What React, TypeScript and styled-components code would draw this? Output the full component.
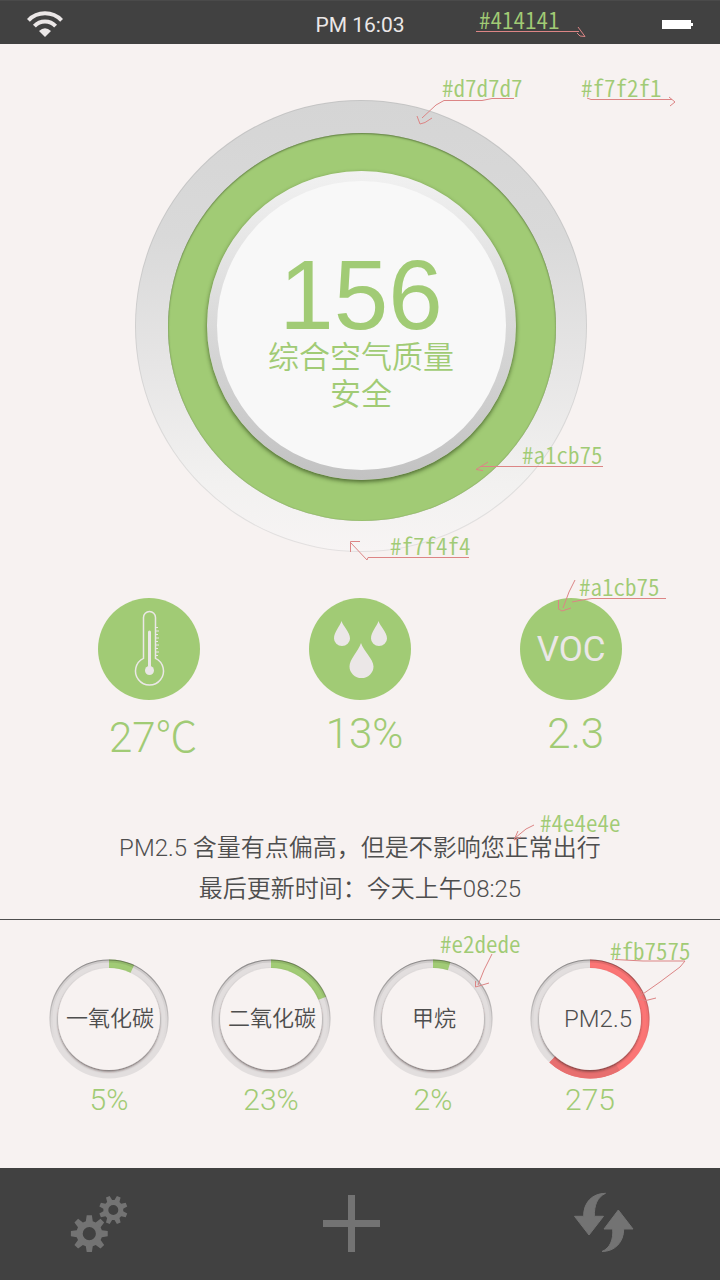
import React from 'react';
import styled, { createGlobalStyle } from 'styled-components';

const GREEN = '#a1cb75';
const RED = '#fb7575';
const DARK = '#414141';
const INK = '#4e4e4e';
const PAPER = '#f7f2f1';
const PALE = '#ebe7e7';
const UI_FONT = "Roboto, 'Noto Sans CJK SC', sans-serif";

const GlobalStyle = createGlobalStyle`
  *, *::before, *::after { box-sizing: border-box; }
  body {
    margin: 0;
    background: ${PAPER};
    color: ${INK};
    font-family: ${UI_FONT};
    font-weight: 300;
  }
`;

const Screen = styled.div`
  position: relative;
  display: flex;
  flex-direction: column;
  min-height: 100vh;
  overflow: hidden;
`;

const StatusBar = styled.header`
  display: grid;
  grid-template-columns: 1fr auto 1fr;
  align-items: center;
  height: 44px;
  padding: 4px 27px 0;
  background: ${DARK};
  border-top: 1px solid #4a4a4a;
  color: ${PALE};
`;

const Clock = styled.time`
  font-size: 21px;
  line-height: 28px;
  font-weight: 400;
`;

const BatterySlot = styled.span`
  display: flex;
  justify-content: flex-end;
`;

const Main = styled.main`
  flex: 1;
`;

const GaugeSection = styled.section`
  display: flex;
  justify-content: center;
  padding: 56px 0 0 2px;
`;

const Disc = styled.div`
  display: flex;
  flex-direction: column;
  align-items: center;
  justify-content: center;
  flex: none;
  border-radius: 50%;
`;

const OuterDisc = styled(Disc)`
  width: 452px;
  height: 452px;
  padding: 2px 0 0 2px;
  border: 1px solid rgba(0, 0, 0, 0.08);
  background: linear-gradient(#d5d5d5, #d9d9d9 30%, #e6e5e5 58%, #f2f1f0 85%, #f7f4f4) border-box;
`;

const ColorDisc = styled(Disc)`
  width: 388px;
  height: 388px;
  padding: 0 2px 4px 0;
  background: ${GREEN};
  box-shadow: inset 0 1px 2px rgba(40, 60, 20, 0.5), inset 0 0 1px rgba(40, 60, 20, 0.3);
`;

const BevelDisc = styled(Disc)`
  width: 309px;
  height: 309px;
  background: linear-gradient(#f1f1f1, #d9d9d9 50%, #c2c2c2);
  box-shadow: 0 2px 4px rgba(30, 50, 10, 0.65);
`;

const FaceDisc = styled(Disc)`
  width: 289px;
  height: 289px;
  padding-top: 14px;
  background: #f8f8f8;
  color: ${GREEN};
`;

const Index = styled.strong`
  font-family: 'Liberation Sans', sans-serif;
  font-size: 98px;
  line-height: 88px;
  font-weight: 400;
`;

const Verdict = styled.span`
  font-size: 31px;
  line-height: 37px;
  font-weight: 350;
`;

const Readings = styled.section`
  display: grid;
  grid-template-columns: repeat(3, 1fr);
  margin-top: 46px;
  padding: 0 6%;
`;

const Reading = styled.div`
  display: flex;
  flex-direction: column;
  align-items: center;
  gap: 10px;
`;

const Badge = styled.div`
  display: flex;
  align-items: center;
  justify-content: center;
  width: 102px;
  height: 102px;
  border-radius: 50%;
  background: ${GREEN};
  color: ${PALE};
  font-size: 35px;
  font-weight: 400;
`;

const Value = styled.span<{ $large?: boolean }>`
  padding-left: ${({ $large }) => ($large ? 9 : 0)}px;
  color: ${GREEN};
  font-size: ${({ $large }) => ($large ? 42 : 30)}px;
  line-height: ${({ $large }) => ($large ? 48 : 36)}px;
`;

const Degree = styled.span`
  font-family: 'Noto Sans CJK SC', sans-serif;
`;

const Notice = styled.section`
  margin-top: 66px;
  padding-bottom: 9px;
  border-bottom: 1px solid ${INK};
  text-align: center;
  font-size: 24px;
  line-height: 41px;
  font-weight: 350;
`;

const Line = styled.p`
  margin: 0;
`;

const Pollutants = styled.section`
  display: grid;
  grid-template-columns: 162fr 162fr 162fr 152fr;
  padding: 39px 54px 48px 28px;
`;

const Pollutant = styled.div`
  display: flex;
  flex-direction: column;
  align-items: center;
  gap: 3px;
`;

const Dial = styled.div`
  display: grid;
  place-items: center;
  width: 120px;
  height: 120px;

  > * {
    grid-area: 1 / 1;
  }
`;

const DialLabel = styled.span<{ $latin?: boolean }>`
  z-index: 1;
  padding-left: ${({ $latin }) => ($latin ? 16 : 2)}px;
  font-size: ${({ $latin }) => ($latin ? 24 : 22)}px;
  line-height: 32px;
  font-weight: 350;
  white-space: nowrap;
`;

const TabBar = styled.nav`
  display: flex;
  align-items: center;
  justify-content: space-between;
  height: 112px;
  padding: 0 88px 2px 70px;
  background: ${DARK};
`;

const TabButton = styled.button`
  width: 58px;
  height: 58px;
  padding: 0;
  border: 0;
  background: none;
  color: #737373;
  cursor: pointer;

  svg {
    display: block;
    overflow: visible;
  }
`;

const NoteLayer = styled.aside`
  position: absolute;
  top: 0;
  left: 50%;
  pointer-events: none;
`;

const NoteText = styled.span<{ $x: number; $y: number }>`
  position: absolute;
  left: ${({ $x }) => $x - 360}px;
  top: ${({ $y }) => $y}px;
  color: ${GREEN};
  font-family: 'Noto Sans CJK SC', sans-serif;
  font-feature-settings: 'hwid';
  font-size: 23px;
  line-height: 28px;
  font-weight: 350;
  white-space: nowrap;
`;

const NoteArrow = styled.svg`
  position: absolute;
  top: 0;
  left: 0;
  overflow: visible;
  fill: none;
  stroke: #dc8585;
  stroke-width: 1;
`;

const notes = [
  { text: '#414141', x: 479, y: 5, d: 'M476 31.5H579M578 27L585 36.5L580 36L577 33' },
  { text: '#d7d7d7', x: 442, y: 73, d: 'M514 98.5H492L482 100.5H444L436 105L422 118M417 116L420 124L425 122.5L432 118' },
  { text: '#f7f2f1', x: 581, y: 73, d: 'M587 98L591 99.5H672M669 97L675 102L670 106' },
  { text: '#a1cb75', x: 522, y: 440, d: 'M603 466.5H480M488 462L476 469.5L483 470.5' },
  { text: '#f7f4f4', x: 390, y: 531, d: 'M469 557.5H368L367 560L351 543M360 541.5H350.5V552' },
  { text: '#a1cb75', x: 579, y: 572, d: 'M666 598.5H592L582 600L572 602M575 580L569 592L563 608M558.5 600V609L562 611L571 608' },
  { text: '#4e4e4e', x: 540, y: 808, d: 'M534 825L526 829L515 838M518 831L514 840L521 837' },
  { text: '#e2dede', x: 440, y: 929, d: 'M492 954L484 970L478 985M475.5 981V987L489 983' },
  { text: '#fb7575', x: 610, y: 936, d: 'M615 959.5L643 961H685L680 967L660 982L640 996M642 991L638 999L646 1000.5L656 998' },
];

const WifiIcon = () => (
  <svg width="36" height="27" viewBox="27 12 36 27" fill="none" stroke={PALE} strokeWidth="4" role="img" aria-label="Wi-Fi">
    <path d="M28.4 21.4A23 23 0 0 1 61.6 21.4" />
    <path d="M34.4 27.2A14.5 14.5 0 0 1 55.6 27.2" />
    <path d="M39 32Q45 26.5 51 32L45 38Z" fill={PALE} stroke="none" />
  </svg>
);

const BatteryIcon = () => (
  <svg width="31" height="9" viewBox="0 0 31 9" fill="#fff" role="img" aria-label="Battery">
    <path d="M0 0H29V3H31V6H29V9H0Z" />
  </svg>
);

const ThermometerIcon = () => (
  <svg width="102" height="102" viewBox="0 0 102 102" fill="none" stroke={PALE} strokeWidth="1.5" role="img" aria-label="Temperature">
    <path d="M45.5 60.4V19.5a6 6 0 0 1 12 0V60.4A14 14 0 1 1 45.5 60.4Z" />
    <path d="M51.5 34V68" strokeWidth="3" strokeLinecap="round" />
    <circle cx="51.5" cy="72.5" r="4.5" fill={PALE} stroke="none" />
    <path d="M58 29.5h2M58 33h3M58 36.5h2M58 40h3M58 43.5h2M58 47h3M58 50.5h2M58 54h3M58 57.5h2" strokeWidth="1" />
  </svg>
);

const DropsIcon = () => (
  <svg width="102" height="102" viewBox="0 0 102 102" fill={PALE} role="img" aria-label="Humidity">
    <path d="M32.5 23C34 28 41 34 41 40.5a8 7.5 0 0 1-16 0C25 34 31 28 32.5 23Z" />
    <path d="M69.5 23C71 28 78 34 78 40.5a8 7.5 0 0 1-16 0C62 34 68 28 69.5 23Z" />
    <path d="M52 45C54.5 53 64.5 61 64.5 68.5a12 11.5 0 0 1-24 0C40.5 61 49.5 53 52 45Z" />
  </svg>
);

const gearPath = (cx: number, cy: number, outer: number, root: number, hole: number, turn: number) => {
  const teeth = 8;
  const points: string[] = [];
  for (let i = 0; i < teeth; i += 1) {
    const mid = turn + (i * 2 * Math.PI) / teeth;
    const corners: [number, number][] = [[root, -0.27], [outer, -0.14], [outer, 0.14], [root, 0.27]];
    corners.forEach(([r, a]) => {
      points.push(`${(cx + r * Math.cos(mid + a)).toFixed(2)} ${(cy + r * Math.sin(mid + a)).toFixed(2)}`);
    });
  }
  return `M${points.join('L')}ZM${cx - hole} ${cy}a${hole} ${hole} 0 1 0 ${hole * 2} 0a${hole} ${hole} 0 1 0 ${-hole * 2} 0Z`;
};

const GearsIcon = () => (
  <svg width="58" height="58" viewBox="0 0 58 58" fill="currentColor" fillRule="evenodd" aria-hidden="true">
    <path d={gearPath(19.3, 39.7, 18.6, 13, 6.6, 0)} />
    <path d={gearPath(43.3, 16, 14.4, 10, 5, Math.PI / 8)} />
  </svg>
);

const PlusIcon = () => (
  <svg width="58" height="58" viewBox="0 0 58 58" fill="currentColor" aria-hidden="true">
    <path d="M26 1h7v25H58v7H33v25h-7V33H1v-7h25Z" />
  </svg>
);

const RefreshIcon = () => (
  <svg width="58" height="58" viewBox="-1 0 58 58" fill="currentColor" stroke="currentColor" strokeLinejoin="round" aria-hidden="true">
    <path d="M30.5-.7C17-.7 8.3 9 8.7 22.3H-.5L14 41L28.5 22.3H19.3C19.3 11 22 3.5 30.5-.7Z" />
    <path d="M27 57.5C40 57.5 48.8 48 48.7 35H58L43.3 16L29 35H37.7C38.5 46 35 54 27 57.5Z" />
  </svg>
);

const CENTER = 60;
const TRACK_RADIUS = 55;

const arcPath = (from: number, to: number) => {
  const at = (deg: number) => {
    const rad = ((deg - 90) * Math.PI) / 180;
    return `${(CENTER + TRACK_RADIUS * Math.cos(rad)).toFixed(2)} ${(CENTER + TRACK_RADIUS * Math.sin(rad)).toFixed(2)}`;
  };
  return `M${at(from)}A${TRACK_RADIUS} ${TRACK_RADIUS} 0 ${to - from > 180 ? 1 : 0} 1 ${at(to)}`;
};

const DialRing = ({ id, sweep, color }: { id: string; sweep: number; color: string }) => (
  <svg width="120" height="120" viewBox="0 0 120 120" fill="none" aria-hidden="true">
    <defs>
      <linearGradient id={`${id}-edge`} gradientUnits="userSpaceOnUse" x1="0" y1="0" x2="0" y2="120">
        <stop offset="0" stopColor="#000" stopOpacity="0.32" />
        <stop offset="0.5" stopColor="#000" stopOpacity="0.1" />
        <stop offset="0.7" stopColor="#000" stopOpacity="0" />
      </linearGradient>
      <filter id={`${id}-drop`} x="-10%" y="-10%" width="120%" height="120%">
        <feDropShadow dx="0" dy="1.5" stdDeviation="1.1" floodColor="#2a1c1c" floodOpacity="0.6" />
      </filter>
    </defs>
    <circle cx="60" cy="60" r="55" stroke="#e2dede" strokeWidth="9" />
    <path d={arcPath(0, sweep)} stroke={color} strokeWidth="9" />
    {sweep > 150 && <path d={arcPath(150, sweep)} stroke="#e76f6f" strokeWidth="9" />}
    <circle cx="60" cy="60" r="58" stroke={`url(#${id}-edge)`} strokeWidth="3" opacity="0.3" />
    <circle cx="60" cy="60" r="59" stroke={`url(#${id}-edge)`} strokeWidth="1.2" />
    <circle cx="60" cy="60" r="51" fill={PAPER} filter={`url(#${id}-drop)`} />
  </svg>
);

const pollutants = [
  { id: 'co', label: '一氧化碳', value: '5%', sweep: 25, color: GREEN },
  { id: 'co2', label: '二氧化碳', value: '23%', sweep: 68, color: GREEN },
  { id: 'ch4', label: '甲烷', value: '2%', sweep: 17, color: GREEN },
  { id: 'pm25', label: 'PM2.5', value: '275', sweep: 223, color: RED, latin: true },
];

export default function App() {
  return (
    <Screen>
      <GlobalStyle />
      <StatusBar>
        <WifiIcon />
        <Clock>PM 16:03</Clock>
        <BatterySlot>
          <BatteryIcon />
        </BatterySlot>
      </StatusBar>

      <Main>
        <GaugeSection>
          <OuterDisc>
            <ColorDisc>
              <BevelDisc>
                <FaceDisc>
                  <Index>156</Index>
                  <Verdict>综合空气质量</Verdict>
                  <Verdict>安全</Verdict>
                </FaceDisc>
              </BevelDisc>
            </ColorDisc>
          </OuterDisc>
        </GaugeSection>

        <Readings>
          <Reading>
            <Badge><ThermometerIcon /></Badge>
            <Value $large>27<Degree>℃</Degree></Value>
          </Reading>
          <Reading>
            <Badge><DropsIcon /></Badge>
            <Value $large>13%</Value>
          </Reading>
          <Reading>
            <Badge>VOC</Badge>
            <Value $large>2.3</Value>
          </Reading>
        </Readings>

        <Notice>
          <Line>PM2.5 含量有点偏高，但是不影响您正常出行</Line>
          <Line>最后更新时间：今天上午08:25</Line>
        </Notice>

        <Pollutants>
          {pollutants.map((item) => (
            <Pollutant key={item.id}>
              <Dial>
                <DialRing id={item.id} sweep={item.sweep} color={item.color} />
                <DialLabel $latin={item.latin}>{item.label}</DialLabel>
              </Dial>
              <Value>{item.value}</Value>
            </Pollutant>
          ))}
        </Pollutants>
      </Main>

      <TabBar>
        <TabButton type="button" aria-label="Settings"><GearsIcon /></TabButton>
        <TabButton type="button" aria-label="Add"><PlusIcon /></TabButton>
        <TabButton type="button" aria-label="Refresh"><RefreshIcon /></TabButton>
      </TabBar>

      <NoteLayer>
        {notes.map((note) => (
          <React.Fragment key={`${note.text}-${note.y}`}>
            <NoteText $x={note.x} $y={note.y}>{note.text}</NoteText>
            <NoteArrow width="1" height="1" viewBox="360 0 1 1">
              <path d={note.d} />
            </NoteArrow>
          </React.Fragment>
        ))}
      </NoteLayer>
    </Screen>
  );
}
